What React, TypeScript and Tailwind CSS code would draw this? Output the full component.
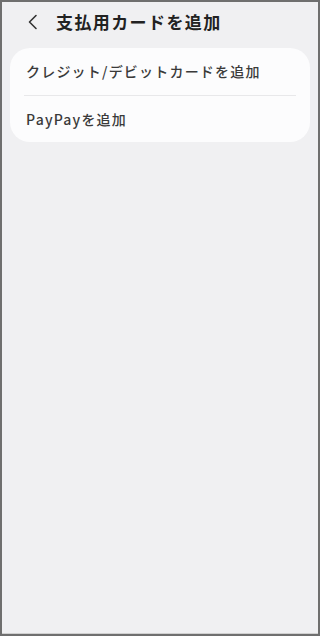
import React from "react";

export default function App() {
  return (
    <div
      className="w-[320px] h-[636px] bg-[#6f6f6f] p-[2px] overflow-hidden"
      style={{ fontFamily: '"Noto Sans CJK JP", "Noto Sans", sans-serif' }}
    >
      <div className="w-full h-full bg-[#f0f0f2] flex flex-col border-b border-[#d0d0d0]">
        <div className="h-[40px] flex items-center pl-[24px]">
          <svg width="14" height="18" viewBox="0 0 14 18" className="text-[#333]">
            <path d="M10 2.5 L3.5 9 L10 15.5" fill="none" stroke="currentColor" strokeWidth="1.6" strokeLinecap="round" strokeLinejoin="round" />
          </svg>
          <span className="ml-[16px] text-[17px] font-bold text-[#222] tracking-[1.4px]">支払用カードを追加</span>
        </div>
        <div className="mx-[8px] mt-[6px] bg-[#fcfcfd] rounded-[20px] px-[16px]">
          <div className="h-[47px] flex items-center text-[14px] font-medium text-[#3a3a3a] tracking-[1.2px]">クレジット/デビットカードを追加</div>
          <div className="h-px bg-[#e8e8ea] mx-[-2px]" />
          <div className="h-[46px] flex items-center text-[14px] font-medium text-[#3a3a3a] tracking-[1.2px]">PayPayを追加</div>
        </div>
      </div>
    </div>
  );
}
